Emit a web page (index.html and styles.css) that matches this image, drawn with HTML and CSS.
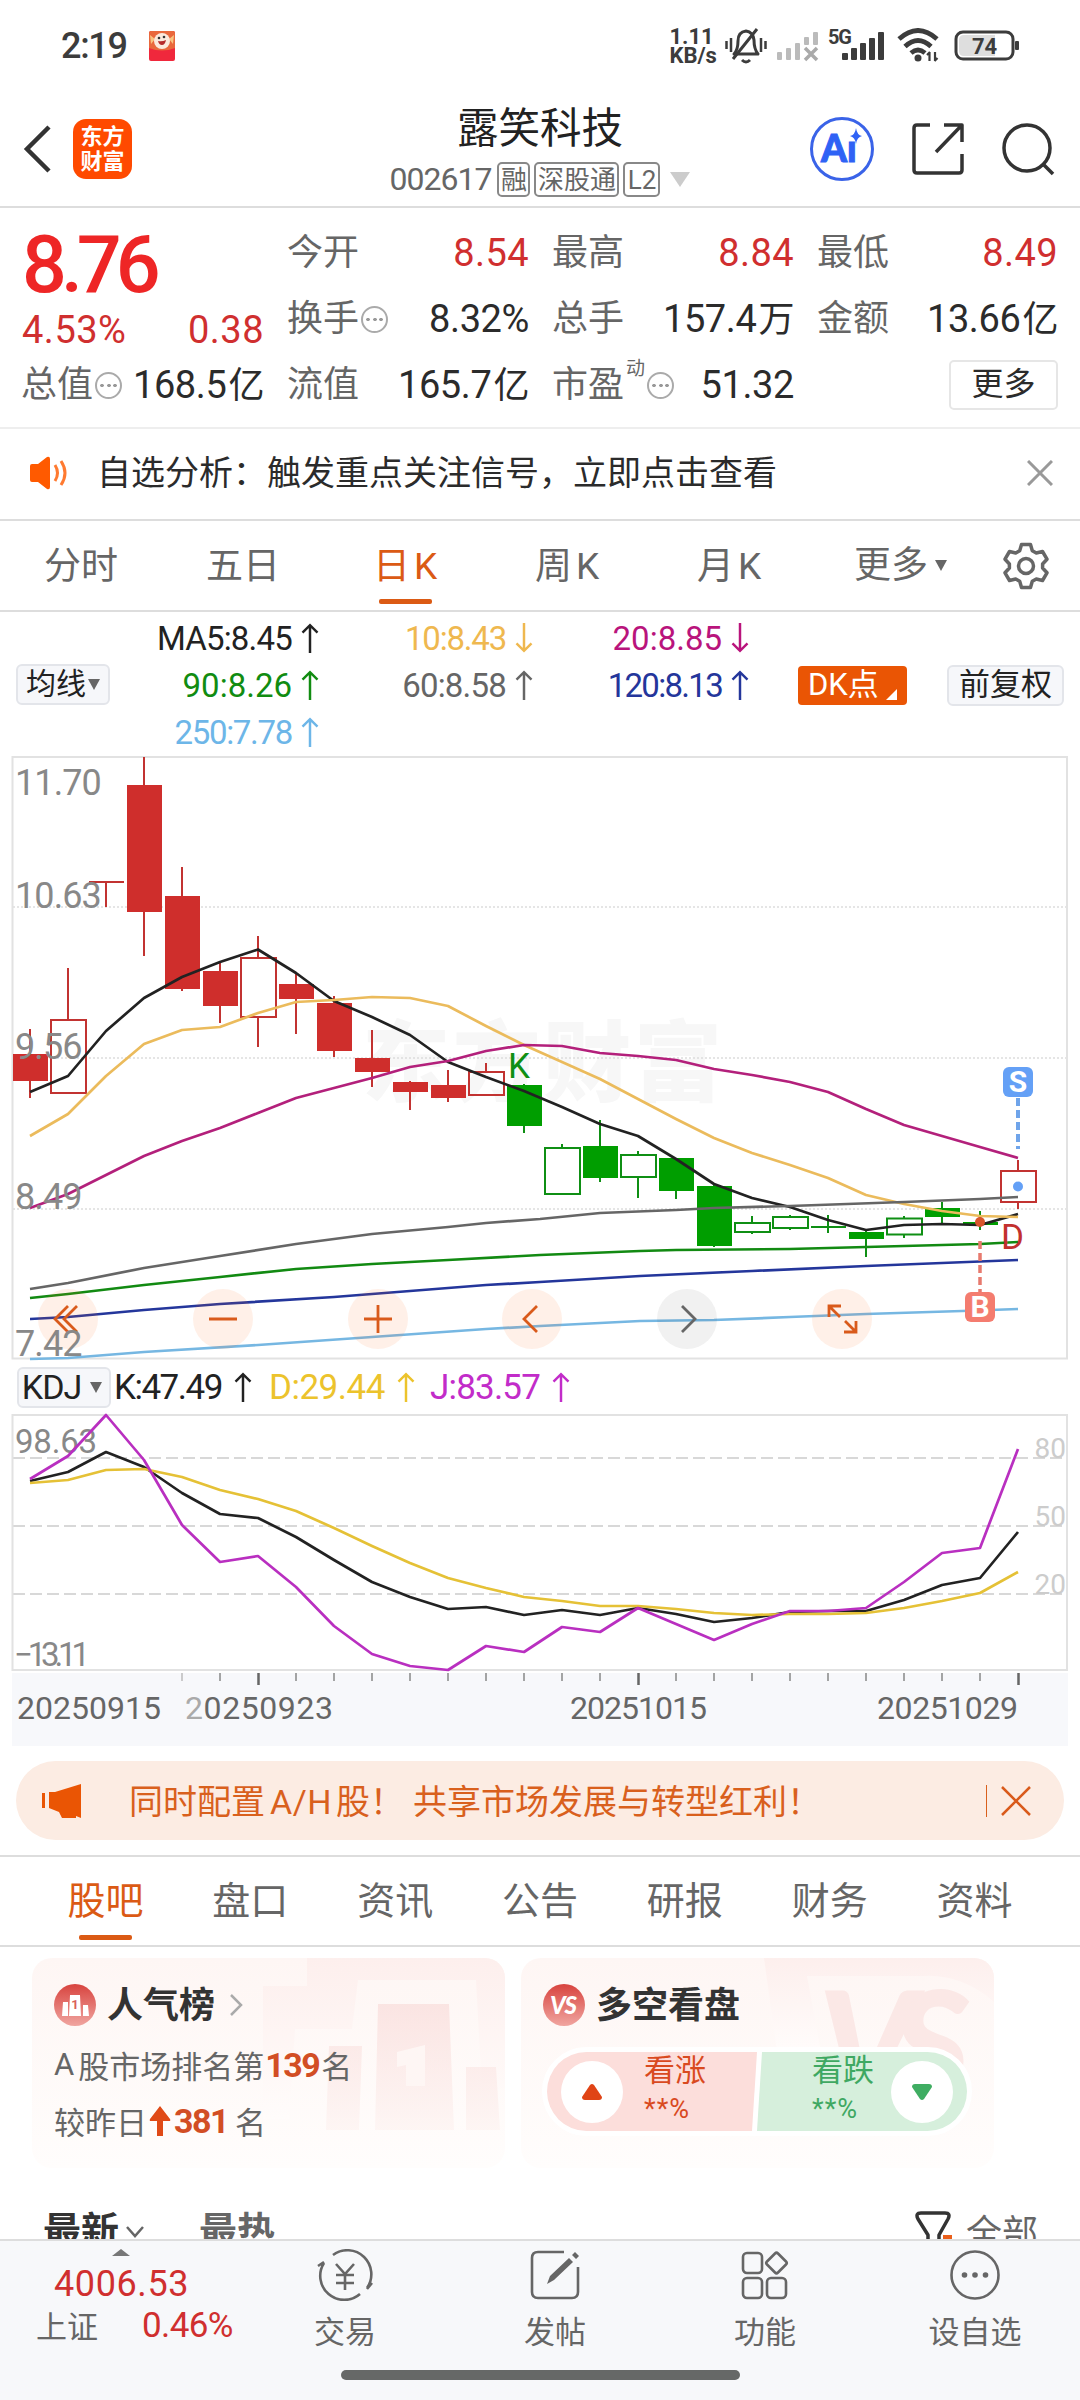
FILE: index.html
```html
<!DOCTYPE html>
<html lang="zh-CN">
<head>
    <meta charset="UTF-8">
    <meta name="viewport" content="width=device-width, initial-scale=1.0">
    <title>露笑科技 002617</title>
    <link rel="stylesheet" href="styles.css">
</head>
<body>
<div class="app">
    <div class="status-bar">
        <span class="status-time">2:19</span>
        <svg class="status-app" width="28" height="32" viewBox="0 0 28 32">
            <rect x="1" y="1" width="26" height="30" rx="2" fill="#f0283c"/>
            <path d="M1 3q0-2 2-2h22q2 0 2 2v15q-13 5-26 0z" fill="#e9683c"/>
            <path d="M2 5l5 4-4 5zM26 5l-5 4 4 5z" fill="#f9c480"/>
            <circle cx="14" cy="11" r="8" fill="#fbe9dc"/>
            <circle cx="11" cy="8" r="1.3" fill="#333"/><circle cx="16" cy="7" r="1.3" fill="#333"/>
            <path d="M10 11q4 1 8-1-1 5-4 5t-4-4z" fill="#b52a2a"/>
        </svg>
        <div class="status-right">
            <div class="net-speed"><span>1.11</span><span>KB/s</span></div>
            <svg width="44" height="40" viewBox="0 0 44 40" fill="none" stroke="#3c3c3c" stroke-width="3">
                <path d="M10 28q4-4 4-13 0-9 8-10 7 1 8 9 0 9 4 14z" stroke-linejoin="round"/>
                <path d="M33 3L9 33M18 34q4 4 8 0" />
                <path d="M7 12v14M2.500 15v8M37 12v14M41.500 15v8" stroke-width="2.500"/>
            </svg>
            <svg width="44" height="32" viewBox="0 0 44 32" fill="#bbb">
                <rect x="1" y="22" width="5" height="8" rx="1"/><rect x="10" y="18" width="5" height="12" rx="1"/>
                <rect x="19" y="13" width="5" height="17" rx="1"/><rect x="28" y="7" width="5" height="8" rx="1"/><rect x="37" y="2" width="5" height="13" rx="1"/>
                <path d="M29 18l12 12M41 18L29 30" stroke="#aaa" stroke-width="3.500"/>
            </svg>
            <div class="signal">
                <span class="signal-type">5G</span>
                <svg width="44" height="32" viewBox="0 0 44 32" fill="#3c3c3c">
                    <rect x="1" y="23" width="6" height="7" rx="1"/><rect x="10" y="18" width="6" height="12" rx="1"/>
                    <rect x="19" y="13" width="6" height="17" rx="1"/><rect x="28" y="8" width="6" height="22" rx="1"/><rect x="37" y="2" width="6" height="28" rx="1"/>
                </svg>
            </div>
            <svg class="wifi" width="44" height="36" viewBox="0 0 44 36" fill="none" stroke="#3c3c3c" stroke-width="4.800">
                <path d="M2 11q19-17 38 0M8 18.500q13-12 26 0M14 25q7-6 14 0"/>
                <circle cx="21" cy="30" r="3.500" fill="#3c3c3c" stroke="none"/>
                <path d="M32.500 33v-9M38 24v9M30 27l3-3M40.500 30l-3 3" stroke-width="2.200"/>
            </svg>
            <svg width="66" height="32" viewBox="0 0 66 32">
                <rect x="2" y="2" width="57" height="27" rx="7" fill="#fff" stroke="#3c3c3c" stroke-width="3"/>
                <path d="M10 5h31v21H10q-5 0-5-5V10q0-5 5-5z" fill="#dedede"/>
                <rect x="61" y="11" width="4" height="9" rx="1" fill="#3c3c3c"/>
                <text x="30.500" y="24" text-anchor="middle" class="battery-text">74</text>
            </svg>
        </div>
    </div>

    <div class="header">
        <svg class="back" width="30" height="50" viewBox="0 0 30 50" fill="none" stroke="#333" stroke-width="4.500"><path d="M27 3L5 25l22 22"/></svg>
        <div class="logo"><span>东方</span><span>财富</span></div>
        <div class="header-title">
            <h1>露笑科技</h1>
            <div class="stock-code">
                <span class="code">002617</span>
                <span class="tag">融</span><span class="tag tag-wide">深股通</span><span class="tag tag-l2">L2</span>
                <svg width="20" height="15" viewBox="0 0 20 15"><path d="M0 0h20L10 15z" fill="#ccc"/></svg>
            </div>
        </div>
        <div class="header-actions">
            <svg width="66" height="66" viewBox="0 0 66 66">
                <circle cx="33" cy="33" r="30.500" fill="#fff" stroke="#3a63e8" stroke-width="3"/>
                <text x="12" y="46" class="ai-text">Aı</text>
                <path d="M47 12q1 7 6 8-5 1-6 8-1-7-6-8 5-1 6-8z" fill="#2f62f5"/>
            </svg>
            <svg width="54" height="54" viewBox="0 0 54 54" fill="none" stroke="#333" stroke-width="3.500" stroke-linejoin="round">
                <path d="M19 3H6q-3 0-3 3v42q0 3 3 3h42q3 0 3-3V32"/><path d="M33 3h18v17M50 4L25 30"/>
            </svg>
            <svg width="54" height="54" viewBox="0 0 54 54" fill="none" stroke="#333" stroke-width="3.500">
                <circle cx="26" cy="26" r="23"/><path d="M42 42l10 10"/>
            </svg>
        </div>
    </div>

    <div class="quote">
        <div class="quote-col col-price">
            <div class="price">8.76</div>
            <div class="price-change"><span>4.53%</span><span>0.38</span></div>
            <div class="item"><span class="label">总值</span><i class="info"></i><span class="value">168.5<i class="unit">亿</i></span></div>
        </div>
        <div class="quote-col">
            <div class="item"><span class="label">今开</span><span class="value up">8.54</span></div>
            <div class="item"><span class="label">换手</span><i class="info"></i><span class="value">8.32%</span></div>
            <div class="item"><span class="label">流值</span><span class="value">165.7<i class="unit">亿</i></span></div>
        </div>
        <div class="quote-col">
            <div class="item"><span class="label">最高</span><span class="value up">8.84</span></div>
            <div class="item"><span class="label">总手</span><span class="value">157.4<i class="unit">万</i></span></div>
            <div class="item"><span class="label">市盈</span><sup class="dynamic">动</sup><i class="info"></i><span class="value">51.32</span></div>
        </div>
        <div class="quote-col">
            <div class="item"><span class="label">最低</span><span class="value up">8.49</span></div>
            <div class="item"><span class="label">金额</span><span class="value">13.66<i class="unit">亿</i></span></div>
            <div class="item item-more"><span class="more-btn">更多</span></div>
        </div>
    </div>

    <div class="notice">
        <svg width="42" height="34" viewBox="0 0 42 34">
            <path d="M2 10q0-2 2-2h6L19 1q3-1 3 2v28q0 3-3 2l-9-7H4q-2 0-2-2z" fill="#ff5a00"/>
            <path d="M27 9q5 8 0 16M33 5q8 12 0 24" fill="none" stroke="#ff7a30" stroke-width="3"/>
        </svg>
        <span class="notice-text">自选分析：触发重点关注信号，立即点击查看</span>
        <svg width="26" height="26" viewBox="0 0 26 26" stroke="#999" stroke-width="3"><path d="M1 1l24 24M25 1L1 25"/></svg>
    </div>

    <div class="period-tabs">
        <span class="period">分时</span>
        <span class="period">五日</span>
        <span class="period active">日<i class="k">K</i></span>
        <span class="period">周<i class="k">K</i></span>
        <span class="period">月<i class="k">K</i></span>
        <span class="period period-more">更多<i class="caret"></i></span>
        <svg class="gear" width="48" height="48" viewBox="0 0 48 48" fill="none" stroke="#666" stroke-width="3.500" stroke-linejoin="round">
            <path d="M19.500 2.500h9l1.800 6.200 4 2.300 6.200-1.500 4.500 7.700L40.600 22v4l4.400 4.800-4.500 7.700-6.200-1.500-4 2.300-1.800 6.200h-9l-1.800-6.200-4-2.300-6.200 1.500L3 30.800 7.400 26v-4L3 17.200l4.500-7.700 6.200 1.500 4-2.300z"/>
            <circle cx="24" cy="24" r="7.500"/>
        </svg>
    </div>

    <div class="ma-panel">
        <span class="pill-btn ma-btn">均线<i class="caret"></i></span>
        <div class="ma-grid">
            <span class="ma ma5">MA5:8.45<svg class="arrow" viewBox="0 0 16 28"><path d="M8 28V2M1 9l7-7 7 7"/></svg></span>
            <span class="ma ma10">10:8.43<svg class="arrow" viewBox="0 0 16 28"><path d="M8 0v26M1 19l7 7 7-7"/></svg></span>
            <span class="ma ma20">20:8.85<svg class="arrow" viewBox="0 0 16 28"><path d="M8 0v26M1 19l7 7 7-7"/></svg></span>
            <span class="ma ma90">90:8.26<svg class="arrow" viewBox="0 0 16 28"><path d="M8 28V2M1 9l7-7 7 7"/></svg></span>
            <span class="ma ma60">60:8.58<svg class="arrow" viewBox="0 0 16 28"><path d="M8 28V2M1 9l7-7 7 7"/></svg></span>
            <span class="ma ma120">120:8.13<svg class="arrow" viewBox="0 0 16 28"><path d="M8 28V2M1 9l7-7 7 7"/></svg></span>
            <span class="ma ma250">250:7.78<svg class="arrow" viewBox="0 0 16 28"><path d="M8 28V2M1 9l7-7 7 7"/></svg></span>
        </div>
        <span class="dk-btn">DK点<svg width="11" height="11" viewBox="0 0 11 11"><path d="M11 0v11H0z" fill="#fff"/></svg></span>
        <span class="pill-btn adj-btn">前复权</span>
    </div>

    <!-- K line chart -->
    <svg class="k-chart" width="1080" height="606" viewBox="0 755 1080 606">
        <text x="362" y="1094" class="watermark" textLength="360">东方财富</text>
        <g stroke="#ddd" stroke-width="1.500" stroke-dasharray="2 2">
            <path d="M13 907h1054M13 1058h1054M13 1209h1054"/>
        </g>
        <rect x="12.500" y="757" width="1054.500" height="601.500" fill="none" stroke="#e2e2e2" stroke-width="2"/>

        <!-- falling days: solid red, rising: outlined -->
        <g stroke="#c23331" stroke-width="2">
            <path d="M30 1029v69M68 968v52M89 882h35M106 882v25M144 757v199M182 867v124M220 962v61M258 936v22M258 1017v30M296 974v60M334 996v61M372 1030v57M410 1081v29M448 1070v32M486 1063v9M1018 1160v11M1018 1202v7"/>
        </g>
        <g fill="#cf2e2c">
            <rect x="13" y="1054" width="35" height="27"/>
            <rect x="127" y="785" width="35" height="127"/>
            <rect x="165" y="896" width="35" height="93"/>
            <rect x="203" y="971" width="35" height="35"/>
            <rect x="279" y="984" width="35" height="15"/>
            <rect x="317" y="1003" width="35" height="48"/>
            <rect x="355" y="1058" width="35" height="14"/>
            <rect x="393" y="1082" width="35" height="10"/>
            <rect x="431" y="1085" width="35" height="13"/>
        </g>
        <g fill="none" stroke="#c23331" stroke-width="2">
            <rect x="51" y="1020" width="35" height="73"/>
            <rect x="241" y="958" width="35" height="59"/>
            <rect x="469" y="1072" width="35" height="23"/>
            <rect x="1001" y="1171" width="35" height="31"/>
        </g>
        <g stroke="#0f8f14" stroke-width="2">
            <path d="M524 1084v49M562 1144v4M600 1120v62M638 1151v4M638 1177v21M676 1158v41M714 1183v64M752 1216v7M752 1232v2M790 1215v2M790 1228v2M811 1227h35M828 1215v18M866 1230v27M904 1216v3M904 1235v3M942 1202v22M980 1211v19"/>
        </g>
        <g fill="#009e00">
            <rect x="507" y="1085" width="35" height="41"/>
            <rect x="583" y="1146" width="35" height="32"/>
            <rect x="659" y="1158" width="35" height="33"/>
            <rect x="697" y="1186" width="35" height="60"/>
            <rect x="849" y="1232" width="35" height="7"/>
            <rect x="925" y="1208" width="35" height="9"/>
            <rect x="963" y="1222" width="35" height="3"/>
        </g>
        <g fill="none" stroke="#0f8f14" stroke-width="2">
            <rect x="545" y="1148" width="35" height="46"/>
            <rect x="621" y="1155" width="35" height="22"/>
            <rect x="735" y="1223" width="35" height="9"/>
            <rect x="773" y="1217" width="35" height="11"/>
            <rect x="887" y="1218.500" width="35" height="16"/>
        </g>

        <g fill="none" stroke-width="2.700" stroke-linejoin="round">
            <polyline stroke="#222" points="30,1092 68,1076 106,1031 144,998 182,977 220,962 258,949.500 296,973 334,1001 372,1017 410,1035 448,1062 486,1077 524,1091 562,1107 600,1124 638,1136 676,1159 714,1184 752,1198 790,1207 828,1220 866,1230 904,1225 942,1224 980,1225 1018,1214"/>
            <polyline stroke="#ebbb5c" points="30,1136 68,1114 106,1076 144,1044 182,1030 220,1027 258,1013 296,1002 334,1000 372,997 410,998 448,1006 486,1026 524,1045 562,1062 600,1079 638,1099 676,1119 714,1138 752,1153 790,1165 828,1178 866,1195 904,1204 942,1211 980,1216 1018,1217"/>
            <polyline stroke="#b3207b" points="30,1208 68,1194 106,1175 144,1156 182,1141 220,1128 258,1113 296,1098 334,1088 372,1078 410,1067 448,1061 486,1051 524,1045 562,1046 600,1053 638,1056 676,1060 714,1069 752,1075 790,1082 828,1092 866,1109 904,1125 942,1136 980,1147 1018,1158"/>
            <polyline stroke="#666" points="30,1289 68,1283 144,1268 220,1256 296,1244 372,1234 448,1227 486,1223 540,1219 600,1213 676,1210 714,1208 790,1206 904,1202 980,1199 1018,1197"/>
            <polyline stroke="#128a12" points="30,1298 68,1294 144,1285 220,1277 296,1269 372,1264 448,1260 540,1255 640,1251 676,1250 790,1249 866,1247 980,1244 1018,1242"/>
            <polyline stroke="#24369b" points="30,1319 68,1317 144,1310 220,1304 334,1297 410,1291 486,1285 540,1282 640,1276 752,1271 866,1266 1018,1260"/>
            <polyline stroke="#76b7e2" points="30,1359 68,1358 144,1352 258,1345 372,1337 486,1329 540,1326 640,1321 714,1320 790,1317 866,1314 962,1311 1018,1309"/>
        </g>

        <text x="508" y="1078" class="mark mark-k">K</text>
        <text x="1001" y="1249" class="mark mark-d">D</text>

        <!-- sell / buy markers -->
        <path d="M1018 1098v51" stroke="#6fa4ea" stroke-width="4" stroke-dasharray="8 4"/>
        <rect x="1003" y="1067" width="30" height="30" rx="6" fill="#64a0f6"/>
        <text x="1018" y="1092" class="flag">S</text>
        <circle cx="1018" cy="1186.500" r="5" fill="#64a0f6"/>
        <path d="M980 1241v51" stroke="#e77a6e" stroke-width="3.500" stroke-dasharray="8 4"/>
        <rect x="965" y="1292" width="30" height="30" rx="6" fill="#f47c6f"/>
        <text x="980" y="1317" class="flag flag-b">B</text>
        <circle cx="980" cy="1222" r="5" fill="#d9562c"/>

        <!-- chart controls -->
        <g fill="#fb6a20" fill-opacity=".1">
            <circle cx="68" cy="1319" r="30"/><circle cx="223" cy="1319" r="30"/><circle cx="378" cy="1319" r="30"/>
            <circle cx="532" cy="1319" r="30"/><circle cx="842" cy="1319" r="30"/>
        </g>
        <circle cx="687" cy="1319" r="30" fill="#333" fill-opacity=".07"/>
        <g fill="none" stroke="#d95a1b" stroke-width="2.800">
            <path d="M68 1306l-13 13 13 13M77 1306l-13 13 13 13"/>
            <path d="M209 1319h28M364 1319h28M378 1305v28M537 1306l-13 13 13 13"/>
            <path d="M829 1317v-11h12M829 1306l11 11M856 1321v11h-12M856 1332l-11-11"/>
        </g>
        <path d="M682 1306l13 13-13 13" fill="none" stroke="#666" stroke-width="2.800"/>

        <g class="axis">
            <text x="15" y="795">11.70</text>
            <text x="15" y="908">10.63</text>
            <text x="15" y="1059">9.56</text>
            <text x="15" y="1209">8.49</text>
            <text x="15" y="1356">7.42</text>
        </g>
    </svg>

    <div class="kdj-bar">
        <span class="pill-btn kdj-btn">KDJ<i class="caret"></i></span>
        <span class="kdj-value kdj-k">K:47.49<svg class="arrow" viewBox="0 0 16 28"><path d="M8 28V2M1 9l7-7 7 7"/></svg></span>
        <span class="kdj-value kdj-d">D:29.44<svg class="arrow" viewBox="0 0 16 28"><path d="M8 28V2M1 9l7-7 7 7"/></svg></span>
        <span class="kdj-value kdj-j">J:83.57<svg class="arrow" viewBox="0 0 16 28"><path d="M8 28V2M1 9l7-7 7 7"/></svg></span>
    </div>

    <!-- KDJ chart -->
    <svg class="kdj-chart" width="1080" height="333" viewBox="0 1413 1080 333">
        <rect x="12" y="1673" width="1056" height="73" fill="#f7f8fb"/>
        <path d="M13 1458h1054M13 1526h1054M13 1594h1054" stroke="#ccc" stroke-width="1.500" stroke-dasharray="12 5"/>
        <rect x="12.500" y="1415" width="1054.500" height="255" fill="none" stroke="#e2e2e2" stroke-width="2"/>
        <g class="axis">
            <text x="15" y="1453" textLength="82">98.63</text>
            <text x="14" y="1666" textLength="76">−13.11</text>
        </g>
        <g class="axis-right">
            <text x="1066" y="1458">80</text>
            <text x="1066" y="1526">50</text>
            <text x="1066" y="1594">20</text>
        </g>
        <g fill="none" stroke-width="2.700" stroke-linejoin="round">
            <polyline stroke="#222" points="30,1481 68,1472 106,1452 144,1467 182,1493 220,1514 258,1518 296,1537 334,1560 372,1582 410,1597 448,1609 486,1607 524,1615 562,1610 600,1615 638,1608 676,1614 714,1622 752,1618 790,1612 828,1611 866,1611 904,1600 942,1585 980,1578 1018,1532"/>
            <polyline stroke="#e5c136" points="30,1483 68,1480 106,1470 144,1469 182,1477 220,1490 258,1499 296,1511 334,1528 372,1546 410,1563 448,1578 486,1588 524,1597 562,1601 600,1606 638,1606 676,1609 714,1613 752,1615 790,1614 828,1614 866,1613 904,1608 942,1601 980,1593 1018,1572"/>
            <polyline stroke="#b92fc0" points="30,1479 68,1456 106,1415 144,1460 182,1525 220,1562 258,1556 296,1587 334,1626 372,1654 410,1666 448,1670 486,1646 524,1652 562,1627 600,1632 638,1608 676,1624 714,1640 752,1624 790,1611 828,1611 866,1608 904,1582 942,1553 980,1548 1018,1449"/>
        </g>
        <path d="M182 1673v8" stroke="#bbb" stroke-width="1.500"/>
        <path d="M220 1673v8M296 1673v8M334 1673v8M372 1673v8M410 1673v8M448 1673v8M486 1673v8M524 1673v8M562 1673v8M600 1673v8M676 1673v8M714 1673v8M752 1673v8M790 1673v8M828 1673v8M866 1673v8M904 1673v8M942 1673v8M980 1673v8" stroke="#888" stroke-width="1.500"/>
        <path d="M258.500 1673v12M638.500 1673v12M1018.500 1673v12" stroke="#666" stroke-width="2.500"/>
        <g class="dates">
            <text x="17" y="1719" textLength="144">20250915</text>
            <text x="185" y="1719" textLength="148"><tspan fill="#aaa">2</tspan>0250923</text>
            <text x="570" y="1719" textLength="137">20251015</text>
            <text x="877" y="1719" textLength="141">20251029</text>
        </g>
    </svg>

    <div class="promo">
        <svg width="42" height="36" viewBox="0 0 42 36" fill="#ea5504"><rect x="1" y="10" width="3" height="15"/><path d="M8 9h6L40 1v34l-5-2v2H21l-3-6-10-4z"/></svg>
        <span class="promo-text">同时配置<i class="ah">A/H</i>股！<i class="promo-gap"></i>共享市场发展与转型红利！</span>
        <i class="promo-line"></i>
        <svg width="30" height="30" viewBox="0 0 30 30" stroke="#d95a1b" stroke-width="2.500"><path d="M1 1l28 28M29 1L1 29"/></svg>
    </div>

    <div class="info-tabs">
        <span class="info-tab active">股吧</span>
        <span class="info-tab">盘口</span>
        <span class="info-tab">资讯</span>
        <span class="info-tab">公告</span>
        <span class="info-tab">研报</span>
        <span class="info-tab">财务</span>
        <span class="info-tab">资料</span>
    </div>

    <div class="cards">
        <div class="card">
            <svg class="card-bg" width="260" height="210" viewBox="0 0 260 210">
                <defs>
                    <linearGradient id="fade" x1="0" y1="0" x2="0" y2="1"><stop offset="0" stop-color="#f9dcda"/><stop offset="1" stop-color="#fdf3f1"/></linearGradient>
                    <linearGradient id="fadeLight" x1="0" y1="0" x2="0" y2="1"><stop offset="0" stop-color="#fdefed"/><stop offset="1" stop-color="#fffcfb"/></linearGradient>
                </defs>
                <path d="M18 28h44V0h198v130l-23 3-6-111H113l-6 49H50l-6 90H18z" fill="url(#fadeLight)"/>
                <path d="M84 88h33l-3 84H81zM133 46h71l5 126h-79zM221 109h30l4 63h-34z" fill="url(#fade)" opacity=".7"/>
                <path d="M152 94l28-7v41h-19v-21l-9 2z" fill="#fef6f4"/>
            </svg>
            <div class="card-title">
                <svg width="42" height="42" viewBox="0 0 42 42">
                    <defs><linearGradient id="badge" x1="0" y1="0" x2="0" y2="1"><stop offset="0" stop-color="#d8443f"/><stop offset="1" stop-color="#f0a5a0"/></linearGradient></defs>
                    <circle cx="21" cy="21" r="21" fill="url(#badge)"/>
                    <path d="M9 18h5v14H8zM16 11h10l1 21H15zM29 21h5l1 11h-6z" fill="#fff"/>
                    <text x="21" y="25" class="badge-one">1</text>
                </svg>
                <h2>人气榜</h2>
                <svg class="chevron" width="14" height="22" viewBox="0 0 14 22" fill="none" stroke="#aaa" stroke-width="2.500"><path d="M2 1l10 10L2 21"/></svg>
            </div>
            <p class="rank"><span class="rank-a">A</span>股市场排名第<b>139</b>名</p>
            <p class="rank">较昨日<svg class="rank-arrow" width="22" height="30" viewBox="0 0 22 30"><path d="M11 0l10 13q1 2-1 2h-6v15H8V15H2q-2 0-1-2z" fill="#e04a17"/></svg><b>381</b><span class="rank-unit">名</span></p>
        </div>
        <div class="card">
            <svg class="card-bg" width="260" height="210" viewBox="0 0 260 210">
                <path d="M30 0h230v44q-32-28-70-26l-117 0 14 76H43z" fill="url(#fadeLight)"/>
                <text x="84" y="142" class="bg-vs">VS</text>
            </svg>
            <div class="card-title">
                <svg width="42" height="42" viewBox="0 0 42 42">
                    <circle cx="21" cy="21" r="21" fill="url(#badge)"/>
                    <text x="20" y="30" class="badge-vs">VS</text>
                </svg>
                <h2>多空看盘</h2>
            </div>
            <div class="vote">
                <div class="vote-side vote-up">
                    <span class="vote-dot"><svg width="20" height="16" viewBox="0 0 20 16"><path d="M8 1q2-2 4 0l8 12q0 3-3 3H3q-3 0-3-3z" fill="#e04416"/></svg></span>
                    <div class="vote-text"><span>看涨</span><small>**%</small></div>
                </div>
                <div class="vote-side vote-down">
                    <div class="vote-text"><span>看跌</span><small>**%</small></div>
                    <span class="vote-dot"><svg width="20" height="16" viewBox="0 0 20 16"><path d="M8 15q2 2 4 0l8-12q0-3-3-3H3Q0 0 0 3z" fill="#3fad62"/></svg></span>
                </div>
            </div>
        </div>
    </div>

    <div class="post-filter">
        <span class="sort sort-new">最新</span>
        <svg class="sort-caret" width="18" height="12" viewBox="0 0 18 12" fill="none" stroke="#666" stroke-width="2.500"><path d="M1 1l8 9 8-9"/></svg>
        <span class="sort">最热</span>
        <svg class="funnel" width="38" height="40" viewBox="0 0 38 40" fill="none" stroke="#333" stroke-width="3.500">
            <path d="M13 40V24L3 8Q0 2 6 2h24q6 0 3 6l-9 16v16" stroke-linejoin="round"/><path d="M28 26h9" stroke="#ea5f1b" stroke-width="4"/>
        </svg>
        <span class="filter-all">全部</span>
    </div>

    <div class="bottom-bar">
        <div class="index-box">
            <svg width="18" height="7" viewBox="0 0 18 7"><path d="M9 0l9 7H0z" fill="#777"/></svg>
            <div class="index-value">4006.53</div>
            <div class="index-row"><span class="index-name">上证</span><span class="index-rate">0.46%</span></div>
        </div>
        <div class="nav-item">
            <svg width="58" height="52" viewBox="0 0 58 52" fill="none" stroke="#666" stroke-width="2.600">
                <path d="M17 6A24 24 0 0 1 51 39M44 45A24 24 0 0 1 8 14M2 17l6-4M56 34l-5 6"/>
                <path d="M20 15l9 10 9-10M20 26h18M20 34h18M29 25v16"/>
            </svg>
            <span>交易</span>
        </div>
        <div class="nav-item">
            <svg width="52" height="52" viewBox="0 0 52 52" fill="none" stroke="#666" stroke-width="2.600">
                <path d="M35 3H9Q3 3 3 9v34q0 6 6 6h34q6 0 6-6V18"/>
                <path d="M18 35l3-8L40 9l4 4-19 18zM43 6l3-3 4 4-3 3z" fill="#666" stroke="none"/>
            </svg>
            <span>发帖</span>
        </div>
        <div class="nav-item">
            <svg width="48" height="52" viewBox="0 0 48 52" fill="none" stroke="#666" stroke-width="2.600" stroke-linejoin="round">
                <rect x="2" y="4" width="19" height="20" rx="4"/><rect x="2" y="29" width="19" height="20" rx="4"/><rect x="26" y="29" width="19" height="20" rx="4"/>
                <path d="M34 4.500q1.500-1.500 3 0l8 8q1.500 1.500 0 3l-8 8q-1.500 1.500-3 0l-8-8q-1.500-1.500 0-3z"/>
            </svg>
            <span>功能</span>
        </div>
        <div class="nav-item">
            <svg width="52" height="52" viewBox="0 0 52 52" fill="none" stroke="#666" stroke-width="2.600">
                <circle cx="26" cy="26" r="23.500"/>
                <g fill="#666" stroke="none"><circle cx="15.500" cy="26" r="2.800"/><circle cx="26" cy="26" r="2.800"/><circle cx="36.500" cy="26" r="2.800"/></g>
            </svg>
            <span>设自选</span>
        </div>
    </div>
    <div class="home-area"><i class="home-bar"></i></div>
</div>
</body>
</html>
```
FILE: styles.css
```css
* {
    box-sizing: border-box;
}
html, body {
    margin: 0;
    padding: 0;
}
body {
    font-family: Roboto, "Noto Sans CJK SC", sans-serif;
    background-color: #fff;
    color: #2b2b2b;
}
h1, h2, p {
    margin: 0;
}
i {
    font-style: normal;
}
svg {
    display: block;
    flex-shrink: 0;
}
.app {
    width: 1080px;
    height: 2400px;
    overflow: hidden;
    display: flex;
    flex-direction: column;
}
.app > * {
    flex-shrink: 0;
}
.caret {
    width: 0;
    height: 0;
    border-left: 6px solid transparent;
    border-right: 6px solid transparent;
    border-top: 11px solid #666;
}

/* Status bar */
.status-bar {
    height: 92px;
    padding: 0 60px 0 61px;
    display: flex;
    align-items: center;
}
.status-time {
    font-size: 36px;
    font-weight: 500;
    letter-spacing: -1.3px;
    color: #3c3c3c;
    width: 87px;
}
.status-right {
    margin-left: auto;
    display: flex;
    align-items: center;
    gap: 8px;
}
.net-speed {
    display: flex;
    flex-direction: column;
    font-size: 22px;
    line-height: 19px;
    font-weight: 700;
    color: #3c3c3c;
    letter-spacing: 0;
    margin-right: -1px;
}
.signal {
    display: flex;
}
.signal-type {
    font-size: 20px;
    line-height: 18px;
    font-weight: 700;
    letter-spacing: -1px;
    color: #3c3c3c;
    margin: -2px -10px 0 0;
}
.wifi {
    margin-left: 4px;
    margin-right: 5px;
}
.battery-text {
    font-size: 22px;
    font-weight: 700;
    fill: #3c3c3c;
}

/* Header */
.header {
    height: 116px;
    border-bottom: 2px solid #ddd;
    display: grid;
    grid-template-columns: 73px 197px 540px 1fr;
}
.back {
    margin: 32px 0 0 22px;
}
.logo {
    width: 59px;
    height: 60px;
    margin-top: 27px;
    border-radius: 13px;
    background-color: #ff4a00;
    color: #fff;
    font-size: 22px;
    font-weight: 700;
    line-height: 25px;
    display: flex;
    flex-direction: column;
    align-items: center;
    justify-content: center;
}
.header-title {
    display: flex;
    flex-direction: column;
    align-items: center;
}
.header-title h1 {
    font-size: 41.5px;
    font-weight: 400;
    line-height: 50px;
    margin-top: 12px;
    color: #222;
}
.stock-code {
    display: flex;
    align-items: center;
    height: 36px;
    margin-top: 7px;
    color: #666;
}
.code {
    font-size: 32px;
    letter-spacing: -1px;
    margin-right: 6px;
}
.tag {
    height: 35px;
    line-height: 32px;
    border: 2px solid #888;
    border-radius: 5px;
    font-size: 26px;
    width: 33px;
    margin-right: 4px;
    display: flex;
    justify-content: center;
}
.tag-wide {
    width: 85px;
}
.tag-l2 {
    width: 37px;
    margin-right: 10px;
}
.header-actions {
    display: flex;
    align-items: center;
    justify-content: space-between;
    padding-right: 25px;
    margin-left: -1px;
}
.ai-text {
    font: 900 37px Lato, sans-serif;
    fill: #2f62f5;
    stroke: #2f62f5;
    stroke-width: 1px;
}

/* Quote */
.quote {
    height: 221px;
    border-bottom: 2px solid #eee;
    padding: 12px 23px 0 22px;
    display: grid;
    grid-template-columns: 242px 241px 241px 240px;
    column-gap: 24px;
}
.quote-col {
    display: flex;
    flex-direction: column;
}
.item {
    height: 66px;
    display: flex;
    align-items: center;
    font-size: 38px;
    line-height: 66px;
    white-space: nowrap;
    position: relative;
}
.label {
    color: #666;
    font-size: 36px;
    margin-left: -1px;
}
.value {
    margin-left: auto;
    letter-spacing: -0.4px;
}
.unit {
    font-size: 36px;
    margin-left: 2px;
}
.up {
    color: #d02f2f;
    letter-spacing: 0.4px;
}
.price {
    height: 82px;
    line-height: 90px;
    font-size: 79px;
    font-weight: 500;
    letter-spacing: -6px;
    color: #ee2626;
}
.price-change {
    height: 50px;
    display: flex;
    align-items: center;
    justify-content: space-between;
    font-size: 38px;
    letter-spacing: 0.5px;
    padding-top: 6px;
    color: #d02f2f;
}
.info {
    width: 27px;
    height: 27px;
    border: 2px solid #aaa;
    border-radius: 50%;
    background: radial-gradient(circle, #999 1.5px, transparent 2px) center / 6px 24px no-repeat,
        radial-gradient(circle, #999 1.5px, transparent 2px) 2px center / 6px 24px no-repeat,
        radial-gradient(circle, #999 1.5px, transparent 2px) 15px center / 6px 24px no-repeat;
    margin-left: 2px;
}
.dynamic {
    position: absolute;
    left: 73px;
    top: 7px;
    font-size: 19px;
    line-height: 20px;
    color: #666;
}
.dynamic + .info {
    margin-left: 23px;
}
.item-more {
    justify-content: flex-end;
}
.more-btn {
    width: 109px;
    height: 50px;
    line-height: 44px;
    border: 2px solid #e6e6e6;
    border-radius: 5px;
    font-size: 32px;
    text-align: center;
}

/* Notice */
.notice {
    height: 92px;
    border-bottom: 2px solid #ddd;
    padding: 0 27px 0 28px;
    display: flex;
    align-items: center;
    justify-content: space-between;
}
.notice > svg {
    margin-top: -2px;
}
.notice-text {
    flex: 1;
    font-size: 34px;
    margin: -7px 0 0 27px;
}

/* Period tabs */
.period-tabs {
    height: 91px;
    border-bottom: 2px solid #ddd;
    display: grid;
    grid-template-columns: repeat(5, 162px) 178px 1fr;
    align-items: center;
}
.period {
    height: 89px;
    line-height: 91px;
    text-align: center;
    font-size: 37px;
    color: #666;
    position: relative;
}
.k {
    margin-left: 4px;
}
.period.active, .info-tab.active {
    color: #db5a14;
}
.period.active::after, .info-tab.active::after {
    content: "";
    position: absolute;
    left: 50%;
    bottom: 6px;
    width: 53px;
    height: 5px;
    margin-left: -26px;
    border-radius: 2px;
    background-color: #db5a14;
}
.period-more {
    display: flex;
    align-items: center;
    justify-content: center;
    gap: 7px;
    padding-left: 3px;
}
.gear {
    margin-left: 14px;
}

/* Moving averages */
.ma-panel {
    height: 143px;
    padding: 3px 16px 0 16px;
    display: flex;
    align-items: center;
}
.pill-btn {
    height: 41px;
    border: 2px solid #e3e5ea;
    border-radius: 6px;
    background-color: #f6f7fa;
    display: flex;
    align-items: center;
    justify-content: center;
    font-size: 30px;
    line-height: 36px;
    color: #222;
}
.ma-btn {
    width: 94px;
    margin-bottom: 2px;
    gap: 2px;
}
.ma-grid {
    width: 638px;
    height: 141px;
    display: grid;
    grid-template-columns: 209px 214px 216px;
    grid-template-rows: repeat(3, 47px);
}
.ma {
    display: flex;
    align-items: center;
    justify-content: flex-end;
    font-size: 33px;
    letter-spacing: -0.8px;
    line-height: 47px;
}
.arrow {
    width: 18px;
    height: 30px;
    margin-left: 9px;
    fill: none;
    stroke: currentColor;
    stroke-width: 2.3;
}
.ma5, .kdj-k {
    color: #222;
}
.ma10 {
    color: #efb84f;
    letter-spacing: -1.2px;
}
.ma20 {
    color: #b9147c;
    letter-spacing: 0;
}
.ma90 {
    color: #118c11;
    letter-spacing: 0;
}
.ma60 {
    color: #666;
}
.ma120 {
    color: #24369b;
    letter-spacing: -1.7px;
}
.ma250 {
    color: #6db6e8;
    letter-spacing: -1.3px;
}
.dk-btn {
    width: 109px;
    height: 39px;
    margin-left: 50px;
    padding-left: 10px;
    border-radius: 4px;
    background-color: #ea5504;
    color: #fff;
    font-size: 31px;
    line-height: 38px;
    display: flex;
    align-items: center;
}
.dk-btn svg {
    align-self: flex-end;
    margin: 0 0 5px 7px;
}
.adj-btn {
    width: 117px;
    margin-left: auto;
    font-size: 31px;
    white-space: nowrap;
}

/* Charts */
.k-chart, .kdj-chart {
    overflow: visible;
}
.watermark {
    font-size: 88px;
    font-weight: 900;
    fill: #f7f7f7;
}
.axis {
    font-size: 36px;
    letter-spacing: -0.9px;
    fill: #888;
}
.kdj-chart .axis {
    font-size: 33px;
    letter-spacing: 0;
}
.axis-right {
    font-size: 28px;
    text-anchor: end;
    fill: #ccc;
}
.dates {
    font-size: 32px;
    fill: #666;
}
.mark {
    font-size: 35px;
}
.mark-k {
    fill: #0f8f14;
}
.mark-d {
    fill: #c2302e;
}
.flag {
    font-size: 30px;
    font-weight: 700;
    fill: #fff;
    text-anchor: middle;
}
.kdj-bar {
    height: 52px;
    padding: 0 17px;
    display: flex;
    align-items: center;
}
.kdj-btn {
    width: 94px;
    font-size: 34px;
    letter-spacing: -1px;
    gap: 9px;
    padding-right: 4px;
}
.kdj-value {
    display: flex;
    align-items: center;
    font-size: 35px;
    letter-spacing: -0.8px;
    padding-left: 3px;
    white-space: nowrap;
}
.kdj-value .arrow {
    margin-left: 12px;
}
.kdj-k {
    width: 155px;
    letter-spacing: -1.5px;
}
.kdj-d {
    width: 161px;
    color: #ecc32c;
    letter-spacing: -0.5px;
}
.kdj-j {
    color: #c22cc9;
}

/* Promo banner */
.promo {
    margin: 15px 16px 15px;
    height: 79px;
    border-radius: 40px;
    background-color: #fcece3;
    color: #d9601d;
    padding: 0 33px 0 25px;
    display: flex;
    align-items: center;
}
.promo-text {
    flex: 1;
    margin: -2px 0 0 46px;
    font-size: 34px;
    white-space: nowrap;
}
.ah {
    margin: 0 4px 0 5px;
    letter-spacing: 0.5px;
}
.promo-gap {
    margin-left: 9px;
}
.promo-line {
    width: 1px;
    height: 32px;
    margin-right: 14px;
    background-color: #d9601d;
}

/* Info tabs */
.info-tabs {
    height: 92px;
    border-top: 2px solid #ddd;
    border-bottom: 2px solid #ddd;
    padding: 0 33px;
    display: grid;
    grid-template-columns: repeat(7, 1fr);
}
.info-tab {
    position: relative;
    text-align: center;
    font-size: 38px;
    line-height: 89px;
    color: #666;
}

/* Cards */
.cards {
    display: flex;
    gap: 16px;
    padding: 11px 32px 0;
}
.card {
    position: relative;
    width: 473px;
    height: 210px;
    overflow: hidden;
    border-radius: 20px;
    background: linear-gradient(#fef6f4, #fffdfc);
    padding: 20px 22px;
}
.card > * {
    position: relative;
}
.card > .card-bg {
    position: absolute;
    right: 0;
    top: 0;
}
.card-title {
    height: 54px;
    display: flex;
    align-items: center;
}
.card-title h2 {
    font-size: 36px;
    font-weight: 700;
    line-height: 50px;
    margin: 1px 0 0 11px;
    color: #333;
}
.chevron {
    margin-left: 14px;
}
.rank {
    display: flex;
    align-items: center;
    height: 56px;
    padding-top: 9px;
    font-size: 31px;
    color: #666;
    white-space: pre;
}
.rank-a {
    margin-right: 4px;
}
.rank b {
    font-size: 34px;
    font-weight: 700;
    letter-spacing: -1.5px;
    color: #d24e24;
    margin: 0 2px 0 1px;
}
.rank-arrow {
    margin: 0 2px;
}
.rank-unit {
    margin-left: 5px;
}
.bg-vs {
    font: italic 900 150px Lato, sans-serif;
    fill: #fbe8e6;
    letter-spacing: -22px;
}
.badge-one {
    font-size: 13px;
    font-weight: 700;
    fill: #d9605b;
    text-anchor: middle;
}
.badge-vs {
    font: italic 900 24px Lato, sans-serif;
    letter-spacing: -1px;
    fill: #fff;
    text-anchor: middle;
}
.vote {
    width: 430px;
    height: 89px;
    margin: 15px 0 0 -1px;
    border: 5px solid #fff;
    border-radius: 45px;
    background-color: #fff;
    overflow: hidden;
    display: flex;
}
.vote-side {
    width: 50%;
    display: flex;
    align-items: center;
    justify-content: space-between;
}
.vote-up {
    background-color: #fcdedb;
    color: #d94a1f;
    clip-path: polygon(0 0, 100% 0, calc(100% - 5px) 100%, 0 100%);
    padding: 0 51px 0 14px;
}
.vote-down {
    background-color: #d6efdc;
    color: #3fa862;
    clip-path: polygon(5px 0, 100% 0, 100% 100%, 0 100%);
    padding: 0 14px 0 55px;
}
.vote-dot {
    width: 62px;
    height: 62px;
    border-radius: 50%;
    background-color: #fff;
    display: flex;
    align-items: center;
    justify-content: center;
}
.vote-text {
    display: flex;
    flex-direction: column;
    font-size: 31px;
    line-height: 40px;
    margin-top: -4px;
}
.vote-text small {
    font-size: 27px;
    line-height: 37px;
    letter-spacing: 1px;
}

/* Post filter row, cut off by the bottom bar */
.post-filter {
    height: 71px;
    padding: 44px 42px 0 43px;
    display: flex;
    align-items: flex-start;
    overflow: hidden;
}
.sort {
    font-size: 38px;
    font-weight: 700;
    line-height: 38px;
    color: #666;
}
.sort-new {
    color: #333;
}
.sort-caret {
    margin: 14px 55px 0 7px;
}
.funnel {
    margin: -1px 13px 0 auto;
}
.filter-all {
    font-size: 36px;
    line-height: 44px;
    color: #666;
}

/* Bottom bar */
.bottom-bar {
    height: 116px;
    border-top: 2px solid #ddd;
    background-color: #f7f8fa;
    display: grid;
    grid-template-columns: 240px repeat(4, 210px);
}
.index-box {
    padding-top: 8px;
}
.index-box svg {
    margin-left: 112px;
}
.index-value {
    margin: 7px 0 0 54px;
    font-size: 36px;
    line-height: 42px;
    letter-spacing: 0.6px;
    color: #d02f2f;
}
.index-row {
    display: flex;
    align-items: center;
    height: 42px;
    margin-top: -1px;
    padding-left: 36px;
}
.index-name {
    width: 106px;
    font-size: 31px;
    margin-top: -2px;
    color: #666;
}
.index-rate {
    font-size: 35px;
    letter-spacing: -0.6px;
    color: #d02f2f;
}
.nav-item {
    display: flex;
    flex-direction: column;
    align-items: center;
    padding-top: 8px;
    font-size: 31px;
    line-height: 40px;
    color: #666;
}
.nav-item span {
    margin-top: 12px;
}
.home-area {
    height: 45px;
    background-color: #f7f8fa;
    padding-top: 15px;
}
.home-bar {
    display: block;
    width: 399px;
    height: 10px;
    margin: 0 auto;
    border-radius: 5px;
    background-color: #666867;
}
```
